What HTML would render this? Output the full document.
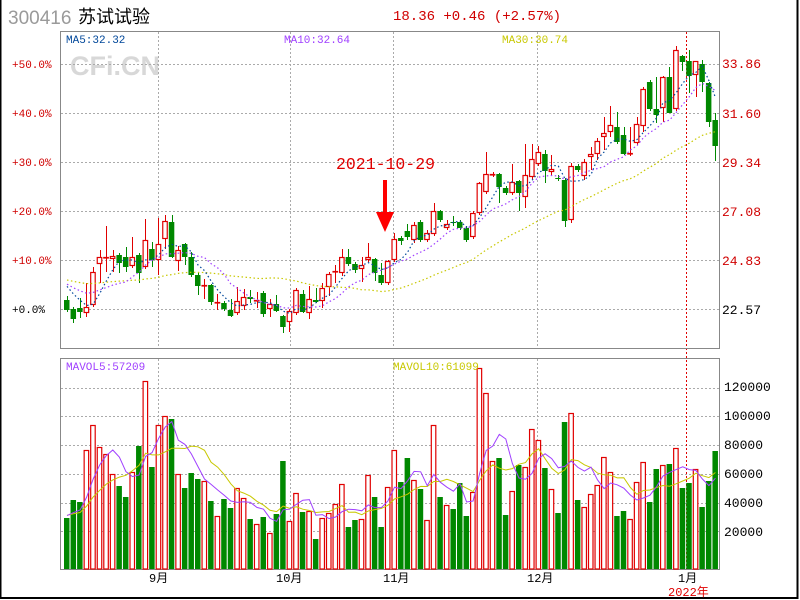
<!DOCTYPE html>
<html><head><meta charset="utf-8"><style>
html,body{margin:0;padding:0;background:#fff;width:800px;height:600px;overflow:hidden}
svg{display:block}
text{font-family:"Liberation Mono","DejaVu Sans Mono",monospace}
</style></head><body>
<svg id="s" width="800" height="600" xmlns="http://www.w3.org/2000/svg">
<rect x="0" y="0" width="800" height="600" fill="#fff"/>
<rect x="0.5" y="-2" width="797" height="600" fill="none" stroke="#000" stroke-width="2"/>
<text x="8" y="24" font-size="19" fill="#9a9a9a" style="font-family:'Liberation Sans',sans-serif">300416</text>
<text x="78" y="23" font-size="18" fill="#000" style="font-family:'Liberation Sans','Noto Sans CJK SC',sans-serif">苏试试验</text>
<text x="393" y="20" font-size="14" fill="#d00000">18.36 +0.46 (+2.57%)</text>
<text x="70" y="75" font-size="27" font-weight="bold" fill="#d8d8d8" style="font-family:'Liberation Sans',sans-serif">CFi.CN</text>
<g id="grid"></g>
<rect x="60.5" y="31.5" width="659" height="317" fill="none" stroke="#888"/>
<rect x="60.5" y="358.5" width="659" height="211" fill="none" stroke="#888"/>
<g id="g"></g>
<text x="66" y="43" font-size="11" fill="#00479a">MA5:32.32</text>
<text x="284" y="43" font-size="11" fill="#a040ff">MA10:32.64</text>
<text x="502" y="43" font-size="11" fill="#c8c800">MA30:30.74</text>
<text x="66" y="370" font-size="11" fill="#a040ff">MAVOL5:57209</text>
<text x="393" y="370" font-size="11" fill="#c8c800">MAVOL10:61099</text>
<text x="336" y="169" font-size="16.5" fill="#e00000">2021-10-29</text>
<rect x="383" y="180" width="4" height="34" fill="#f00"/>
<polygon points="376,212 394,212 385,232" fill="#f00"/>
<g font-size="11" fill="#d00000">
<text x="12" y="68">+50.0%</text><text x="12" y="117">+40.0%</text><text x="12" y="166">+30.0%</text>
<text x="12" y="215">+20.0%</text><text x="12" y="264">+10.0%</text><text x="12" y="313" fill="#000">+0.0%</text>
</g>
<g font-size="13" fill="#d00000">
<text x="722" y="68">33.86</text><text x="722" y="118">31.60</text><text x="722" y="167">29.34</text>
<text x="722" y="216">27.08</text><text x="722" y="265">24.83</text><text x="722" y="314" fill="#000">22.57</text>
</g>
<g font-size="13" fill="#000">
<text x="724" y="391">120000</text><text x="724" y="420">100000</text><text x="724" y="449">80000</text>
<text x="724" y="478">60000</text><text x="724" y="507">40000</text><text x="724" y="536">20000</text>
</g>
<g font-size="12" fill="#000" style="font-family:'Liberation Sans','Noto Sans CJK SC',sans-serif">
<text x="149" y="582">9月</text><text x="276" y="582">10月</text><text x="383" y="582">11月</text>
<text x="527" y="582">12月</text><text x="678" y="582">1月</text>
<text x="668" y="596" fill="#e00000">2022年</text>
</g>
</svg>
<script>
var NS="http://www.w3.org/2000/svg";
function el(p,t,a){var e=document.createElementNS(NS,t);for(var k in a)e.setAttribute(k,a[k]);p.appendChild(e);return e;}
var grid=document.getElementById('grid'),g=document.getElementById('g');
[64,113,162,211,260,309].forEach(function(y){el(grid,'line',{x1:61,x2:719,y1:y+.5,y2:y+.5,stroke:'#aaa','stroke-dasharray':'2 2'});});
[388,416,445,474,503,531].forEach(function(y){el(grid,'line',{x1:61,x2:719,y1:y+.5,y2:y+.5,stroke:'#aaa','stroke-dasharray':'2 2'});});
[158,290,393,537].forEach(function(x){el(grid,'line',{x1:x+.5,x2:x+.5,y1:32,y2:348,stroke:'#aaa','stroke-dasharray':'2 2'});el(grid,'line',{x1:x+.5,x2:x+.5,y1:359,y2:569,stroke:'#aaa','stroke-dasharray':'2 2'});});
el(grid,'line',{x1:686.5,x2:686.5,y1:32,y2:569,stroke:'#e00000','stroke-dasharray':'2 2'});
var C=[[300,310,0,296,312],[309,319,0,307,323],[308,312,0,298,318],[307,313,1,283,317],[272,305,1,267,307],[257,264,1,250,283],[257,258,1,226,272],[256,259,1,250,272],[255,263,0,253,273],[257,267,0,247,272],[257,266,1,237,268],[255,273,0,253,283],[240,267,1,219,269],[249,260,0,242,267],[244,260,1,218,275],[221,239,1,215,249],[222,257,0,215,258],[250,261,1,246,271],[244,257,0,243,265],[257,275,0,252,277],[275,286,0,273,295],[285,286,1,279,299],[285,302,0,284,305],[302,303,1,294,310],[303,309,0,301,311],[310,316,0,299,317],[301,313,1,287,315],[297,306,1,289,310],[297,299,0,290,303],[300,301,1,292,308],[293,314,0,291,317],[304,309,1,299,317],[304,311,0,295,312],[316,327,0,315,333],[311,322,1,309,332],[290,313,1,288,315],[294,312,0,290,313],[299,313,1,286,319],[300,302,0,288,303],[288,301,1,283,308],[274,287,1,272,296],[271,272,1,265,283],[257,273,1,249,276],[257,264,0,249,266],[264,270,0,262,273],[265,269,1,257,282],[257,260,1,243,262],[259,273,0,258,281],[275,283,0,263,285],[261,283,1,260,285],[239,260,1,233,262],[238,241,0,236,245],[231,237,0,224,240],[225,240,1,222,243],[222,240,0,220,242],[233,240,1,230,242],[211,234,1,203,236],[211,220,0,210,222],[224,228,1,220,230],[222,223,0,216,226],[222,228,0,220,230],[228,240,0,226,242],[213,237,1,211,239],[183,213,1,182,215],[174,192,1,152,194],[174,175,1,172,177],[174,187,0,173,203],[188,193,0,186,195],[182,193,1,164,195],[181,193,0,180,211],[175,197,1,144,208],[159,177,1,144,179],[152,164,1,146,166],[154,171,0,150,183],[169,172,1,155,175],[178,179,0,175,181],[180,221,0,178,227],[166,220,1,163,223],[166,170,0,164,172],[162,176,1,159,180],[154,157,1,147,170],[141,154,1,138,160],[133,137,1,117,150],[125,132,1,106,137],[127,142,0,112,144],[135,154,0,127,155],[153,154,1,127,156],[124,143,1,117,145],[89,126,1,87,132],[82,109,0,80,111],[109,115,0,77,123],[77,108,1,76,122],[77,113,0,67,113],[50,109,1,46,111],[56,62,0,55,71],[61,76,0,50,93],[61,75,1,61,97],[64,82,0,60,92],[83,122,0,82,127],[120,146,0,113,161]];
var V=[518,500,502,450,425,447,454,474,486,497,472,446,381,467,425,416,419,474,488,473,479,481,501,516,499,508,488,498,519,524,517,533,514,461,521,493,512,511,539,518,513,504,484,527,520,519,475,497,527,487,450,482,458,480,489,520,425,497,505,509,483,516,492,368,393,461,458,515,491,465,467,429,440,468,489,513,422,413,500,507,494,485,457,472,516,511,519,482,462,502,469,465,464,448,488,483,469,507,481,451];
var sp=6.55,x0=64,w=5.5;
var closes=[];for(var i=0;i<29;i++)closes.push(i<15?276:284-(i-15)*0.3);
var vols=[];for(var i=0;i<10;i++)vols.push(515);
C.forEach(function(c,i){
 var x=x0+sp*i,cx=Math.round(x+w/2)+0.5,up=c[2],col=up?'#e00000':'#008800';
 el(g,'line',{x1:cx,x2:cx,y1:c[3],y2:c[4],stroke:col,'stroke-width':1});
 var h=Math.max(c[1]-c[0],1);
 if(up){el(g,'rect',{x:x+0.5,y:c[0]+0.5,width:w-1,height:Math.max(h-1,0.5),fill:'#fff',stroke:col,'stroke-width':1.2});}
 else el(g,'rect',{x:x,y:c[0],width:w,height:h,fill:col});
 closes.push(up?c[0]:c[1]);
 var vy=V[i];
 if(up)el(g,'rect',{x:x+0.5,y:vy+0.5,width:w-1,height:569-vy-0.5,fill:'#fff',stroke:col,'stroke-width':1.2});
 else el(g,'rect',{x:x,y:vy,width:w,height:569-vy,fill:col});
 vols.push(vy);
});
function ma(arr,n,off){var pts=[];for(var i=0;i<C.length;i++){var s=0;for(var k=0;k<n;k++)s+=arr[i+off-k];pts.push((x0+sp*i+3).toFixed(1)+','+(s/n).toFixed(1));}return pts.join(' ');}
el(g,'polyline',{points:ma(closes,30,29),fill:'none',stroke:'#c8c800','stroke-width':1.2,'stroke-dasharray':'1.5 2.5'});
el(g,'polyline',{points:ma(closes,10,29),fill:'none',stroke:'#a040ff','stroke-width':1.2,'stroke-dasharray':'1.5 2.5'});
el(g,'polyline',{points:ma(closes,5,29),fill:'none',stroke:'#00479a','stroke-width':1.2,'stroke-dasharray':'1.5 2.5'});
el(g,'polyline',{points:ma(vols,10,10),fill:'none',stroke:'#c8c800','stroke-width':1});
el(g,'polyline',{points:ma(vols,5,10),fill:'none',stroke:'#a040ff','stroke-width':1});
</script>
</body></html>
